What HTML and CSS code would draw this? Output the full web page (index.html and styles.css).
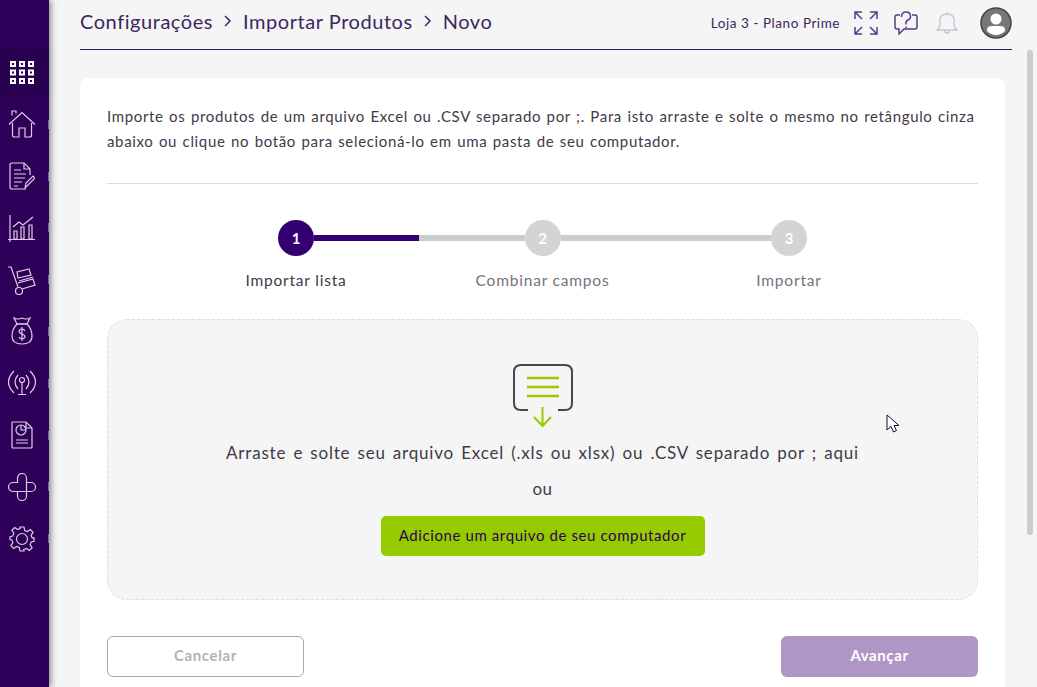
FILE: index.html
```html
<!doctype html>
<html>
  <head>
    <title>Importar Produtos</title>
    <link rel="stylesheet" href="styles.css">
  </head>
  <body>
    <aside class="sidebar">
      <div class="side-item side-grid">
        <svg width="26" height="24" viewBox="0 0 26 24" fill="none" stroke="#fff" stroke-width="2">
          <rect x="2" y="2" width="4" height="4"/><rect x="11" y="2" width="4" height="4"/><rect x="20" y="2" width="4" height="4"/>
          <rect x="2" y="10.500" width="4" height="4"/><rect x="11" y="10.500" width="4" height="4"/><rect x="20" y="10.500" width="4" height="4"/>
          <rect x="2" y="19" width="4" height="4"/><rect x="11" y="19" width="4" height="4"/><rect x="20" y="19" width="4" height="4"/>
        </svg>
      </div>
      <div class="side-item">
        <svg width="28" height="28" viewBox="0 0 28 28" class="side-icon">
          <path d="M1 14.500 14 2.500l13 12"/><path d="M4 5.500V1h4v2.500"/>
          <path d="M4.500 13v12q0 2 2 2h4.500v-9h6v9h4.500q2 0 2-2V13"/>
        </svg>
      </div>
      <div class="side-item">
        <svg width="26" height="28" viewBox="0 0 26 28" class="side-icon">
          <path d="M17 27H3q-2 0-2-2V3q0-2 2-2h12l6 6v6"/><path d="M15 1v6h6"/>
          <path d="M5 8h7M5 12h12M5 16h11M5 20h8M5 24h4"/>
          <path d="m16 26 1-5 7-7 2 2-7 7z"/>
        </svg>
      </div>
      <div class="side-item">
        <svg width="28" height="28" viewBox="0 0 28 28" class="side-icon">
          <path d="M2 1v27M0 25.500h27"/>
          <path d="M6 17h3v8H6zM13 13h3v12h-3zM21 11h3v14h-3z"/>
          <path d="m5 13 6-5 4 3 10-8"/>
        </svg>
      </div>
      <div class="side-item">
        <svg width="28" height="30" viewBox="0 0 28 30" class="side-icon">
          <path d="M0 2h3l7 20"/><circle cx="11" cy="26" r="3.500"/>
          <path d="m14 24 13-4-2-6-15 4"/><path d="m10 13 13-3-2-6-12 3z"/>
          <path d="m11 16 14-4"/>
        </svg>
      </div>
      <div class="side-item">
        <svg width="22" height="28" viewBox="0 0 22 28" class="side-icon">
          <path d="M3 1q4 2 8 0 4 2 8 0l-3 6H6z"/><path d="M6 7q-5 5-5 12 0 8 10 8t10-8q0-7-5-12"/>
          <path d="M6 7h10"/><path d="M14 14q-1-2-3-2t-3 2q0 2 3 3t3 3q-1 2-3 2t-3-2M11 10v14"/>
        </svg>
      </div>
      <div class="side-item">
        <svg width="28" height="26" viewBox="0 0 28 26" class="side-icon">
          <circle cx="14" cy="10" r="2.500"/><path d="M14 12.500V24.500M10 24.500h8"/>
          <path d="M6 1q-11 11 0 22M10 5q-6 7 0 14M22 1q11 11 0 22M18 5q6 7 0 14"/>
        </svg>
      </div>
      <div class="side-item">
        <svg width="22" height="28" viewBox="0 0 22 28" class="side-icon">
          <path d="M15 1H2q-1 0-1 1v24q0 1 1 1h18q1 0 1-1V7z"/><path d="M15 1v6h6"/>
          <circle cx="10" cy="9" r="5"/><path d="M10 4v5h5"/><path d="M5 19h12M5 22h12"/>
        </svg>
      </div>
      <div class="side-item">
        <svg width="28" height="28" viewBox="0 0 28 28" class="side-icon">
          <path d="M5 9.500h4.500V5a4.500 4.500 0 0 1 9 0v18a4.500 4.500 0 0 1-9 0v-4.500H5a4.500 4.500 0 0 1 0-9z"/>
          <path d="M18.500 9.500H23a4.500 4.500 0 0 1 0 9H9.500"/>
        </svg>
      </div>
      <div class="side-item">
        <svg width="26" height="26" viewBox="0 0 26 26" class="side-icon">
          <circle cx="13" cy="13" r="5.500"/>
          <path d="M11 1h4l.7 3.500 2.600 1.100 3-2 2.800 2.800-2 3 1.100 2.600L25 11.700v3.600l-2.800.7-1.100 2.600 2 3-2.800 2.800-3-2-2.600 1.100L15 25h-4l-.7-3.500-2.600-1.100-3 2-2.800-2.800 2-3L2.800 14 1 13.500v-2.800l2.800-.7 1.100-2.600-2-3 2.800-2.800 3 2 2.600-1.100z"/>
        </svg>
      </div>
    </aside>

    <main class="page">
      <header class="topbar">
        <nav class="crumbs">
          <span>Configurações</span>
          <svg class="crumb-sep" width="8" height="12" viewBox="0 0 8 12"><path d="m1 1 5 5-5 5"/></svg>
          <span>Importar Produtos</span>
          <svg class="crumb-sep" width="8" height="12" viewBox="0 0 8 12"><path d="m1 1 5 5-5 5"/></svg>
          <span>Novo</span>
        </nav>
        <div class="top-right">
          <span class="store">Loja 3 - Plano Prime</span>
          <svg class="top-icon" width="24" height="24" viewBox="0 0 24 24">
            <path d="M1 8V1h7M1 1l7 7M16 1h7v7M23 1l-7 7M1 16v7h7M1 23l7-7M23 16v7h-7M23 23l-7-7"/>
          </svg>
          <svg class="top-icon" width="24" height="24" viewBox="0 0 24 24">
            <path d="M6 4H3q-2 0-2 2v10q0 2 2 2h2v5l5-5h11q2 0 2-2V6q0-2-2-2h-3"/>
            <path d="M7.500 6q0-5 4.500-5t4.500 4.500q0 2.500-2.500 3.500t-2 4.500M12 15.500v2"/>
          </svg>
          <svg class="top-bell" width="22" height="24" viewBox="0 0 22 24">
            <path d="M1 19q3-2 3-6V9q0-6 7-6t7 6v4q0 4 3 6z"/><path d="M11 1v2M8.500 19a2.500 3 0 0 0 5 0"/>
          </svg>
          <svg width="32" height="32" viewBox="0 0 32 32">
            <circle cx="16" cy="16" r="15" fill="#777" stroke="#444" stroke-width="1.500"/>
            <circle cx="16" cy="12" r="5.500" fill="#fff"/>
            <path d="M7 23q0-4 5-4h8q5 0 5 4v1q-4 4-9 4t-9-4z" fill="#fff"/>
          </svg>
        </div>
      </header>

      <section class="card">
        <p class="intro">Importe os produtos de um arquivo Excel ou .CSV separado por ;. Para isto arraste e solte o mesmo no retângulo cinza abaixo ou clique no botão para selecioná-lo em uma pasta de seu computador.</p>
        <hr class="divider">

        <div class="track">
          <span class="dot dot-on">1</span>
          <span class="bar"><span class="bar-fill"></span></span>
          <span class="dot">2</span>
          <span class="bar"></span>
          <span class="dot">3</span>
        </div>
        <div class="step-labels">
          <span class="label-on">Importar lista</span>
          <span>Combinar campos</span>
          <span>Importar</span>
        </div>

        <div class="dropzone">
          <svg width="60" height="64" viewBox="0 0 60 64" fill="none">
            <path d="M15 46H8q-7 0-7-7V8q0-7 7-7h44q7 0 7 7v31q0 7-7 7h-7" stroke="#4a4450" stroke-width="2"/>
            <path d="M14 14h32M14 23h32M14 32h32" stroke="#a8c400" stroke-width="2.500"/>
            <path d="M29.500 43v19M21 53l8.500 9 8.500-9" stroke="#95cc00" stroke-width="2"/>
          </svg>
          <p class="drop-text">Arraste e solte seu arquivo Excel (.xls ou xlsx) ou .CSV separado por ; aqui</p>
          <p class="drop-or">ou</p>
          <button class="btn-add">Adicione um arquivo de seu computador</button>
        </div>

        <div class="actions">
          <button class="btn btn-cancel">Cancelar</button>
          <button class="btn btn-next">Avançar</button>
        </div>
      </section>
    </main>

    <div class="scrollbar"></div>

    <svg class="cursor" width="14" height="20" viewBox="0 0 14 20">
      <path d="M1 1v15l4-3.500 2.500 5.500 3-1.500L8 11.500h5z" fill="#fff" stroke="#1d0a33" stroke-width="1"/>
    </svg>
  </body>
</html>
```

FILE: styles.css
```css
* { margin: 0; padding: 0; box-sizing: border-box; }

html, body { height: 100%; overflow: hidden; }

body {
  display: flex;
  background: #f5f5f5;
  color: #3f3a48;
  font: 15px "Lato", "Open Sans", sans-serif;
}

/* Sidebar */
.sidebar {
  width: 49px;
  flex: none;
  padding-top: 47px;
  background: #2f0059;
  box-shadow: 2px 0 6px rgba(0, 0, 0, 0.45);
}

.side-item {
  position: relative;
  height: 51.800px;
  display: flex;
  align-items: center;
  justify-content: center;
  padding-right: 5px;
  border-bottom: 1px solid #2a0050;
}

/* first letter of the collapsed menu label, clipped by the sidebar edge */
.side-item::after {
  content: "";
  position: absolute;
  right: 0;
  top: 21px;
  width: 1px;
  height: 9px;
  background: #7d6a94;
}

.side-grid { background: #2a0050; }
.side-grid::after { display: none; }

.side-icon {
  fill: none;
  stroke: #d9cfe3;
  stroke-width: 1.200;
}

/* Page */
.page {
  flex: 1;
  display: flex;
  flex-direction: column;
  padding-left: 31px;
  min-width: 0;
}

.topbar {
  height: 50px;
  flex: none;
  width: 932px;
  display: flex;
  align-items: center;
  justify-content: space-between;
  padding-bottom: 3px;
  border-bottom: 1px solid #3a1560;
}

.crumbs {
  display: flex;
  align-items: center;
  gap: 11px;
  margin-bottom: 5px;
  font-size: 20px;
  letter-spacing: 0.550px;
  color: #3b2660;
}

.crumb-sep {
  fill: none;
  stroke: #3b2660;
  stroke-width: 1.500;
}

.top-right {
  display: flex;
  align-items: center;
  gap: 16px;
}

.store {
  margin-right: -2px;
  font-size: 13.500px;
  letter-spacing: 0.550px;
  color: #3b2660;
}

.top-icon {
  fill: none;
  stroke: #5b3a8c;
  stroke-width: 1.500;
}

.top-bell {
  fill: none;
  stroke: #c9c2d4;
  stroke-width: 1.300;
  margin: 0 6px 0 2px;
}

/* Card */
.card {
  width: 925px;
  flex: 1;
  margin-top: 28px;
  padding: 26px 27px 0;
  background: #fff;
  border-radius: 8px 8px 0 0;
}

.intro {
  font-size: 15px;
  line-height: 25px;
  letter-spacing: 0.650px;
  word-spacing: 1px;
}

.divider {
  margin: 29px 0 36px;
  border: 0;
  border-top: 1px solid #dcdcdc;
}

/* Steps */
.track {
  width: 529px;
  margin: 0 auto;
  display: flex;
  align-items: center;
}

.dot {
  width: 36px;
  height: 36px;
  flex: none;
  display: flex;
  align-items: center;
  justify-content: center;
  border-radius: 50%;
  background: #d4d4d4;
  color: #fff;
  font-size: 15px;
  font-weight: 700;
}

.dot-on { background: #340071; }

.bar {
  flex: 1;
  height: 6px;
  display: block;
  background: #cccccc;
}

.bar-fill {
  display: block;
  width: 50%;
  height: 100%;
  background: #340071;
}

.step-labels {
  display: grid;
  grid-template-columns: repeat(3, 246.500px);
  justify-content: center;
  margin-top: 15px;
  text-align: center;
  font-size: 15.500px;
  letter-spacing: 0.800px;
  color: #77727c;
}

.label-on { color: #3f3a48; }

/* Dropzone */
.dropzone {
  height: 281px;
  margin-top: 30px;
  display: flex;
  flex-direction: column;
  align-items: center;
  padding-top: 44px;
  background: #f5f5f5;
  border: 1px dashed #dedede;
  border-radius: 20px;
}

.drop-text {
  margin-top: 14px;
  font-size: 17px;
  letter-spacing: 0.800px;
  word-spacing: 2px;
}

.drop-or {
  margin-top: 15px;
  font-size: 17px;
  letter-spacing: 0.500px;
}

.btn-add {
  margin-top: 17px;
  width: 324px;
  height: 40px;
  padding-bottom: 2px;
  border: 0;
  border-radius: 5px;
  background: #95cc00;
  color: #2f0059;
  font: 15px "Lato", "Open Sans", sans-serif;
  letter-spacing: 0.600px;
}

/* Actions */
.actions {
  margin-top: 36px;
  display: flex;
  justify-content: space-between;
}

.btn {
  width: 197px;
  height: 41px;
  padding-bottom: 4px;
  border-radius: 6px;
  font: 700 15px "Lato", "Open Sans", sans-serif;
  letter-spacing: 0.600px;
}

.btn-cancel {
  background: #fff;
  border: 1px solid #a9a9a9;
  color: #b3b3b3;
}

.btn-next {
  border: 0;
  background: #af97c5;
  color: #fff;
}

/* Overlays: page scrollbar and the captured mouse pointer */
.scrollbar {
  position: absolute;
  left: 1027px;
  top: 50px;
  width: 6px;
  height: 485px;
  border-radius: 3px;
  background: #cccccc;
}

.cursor {
  position: absolute;
  left: 886px;
  top: 414px;
}
```
